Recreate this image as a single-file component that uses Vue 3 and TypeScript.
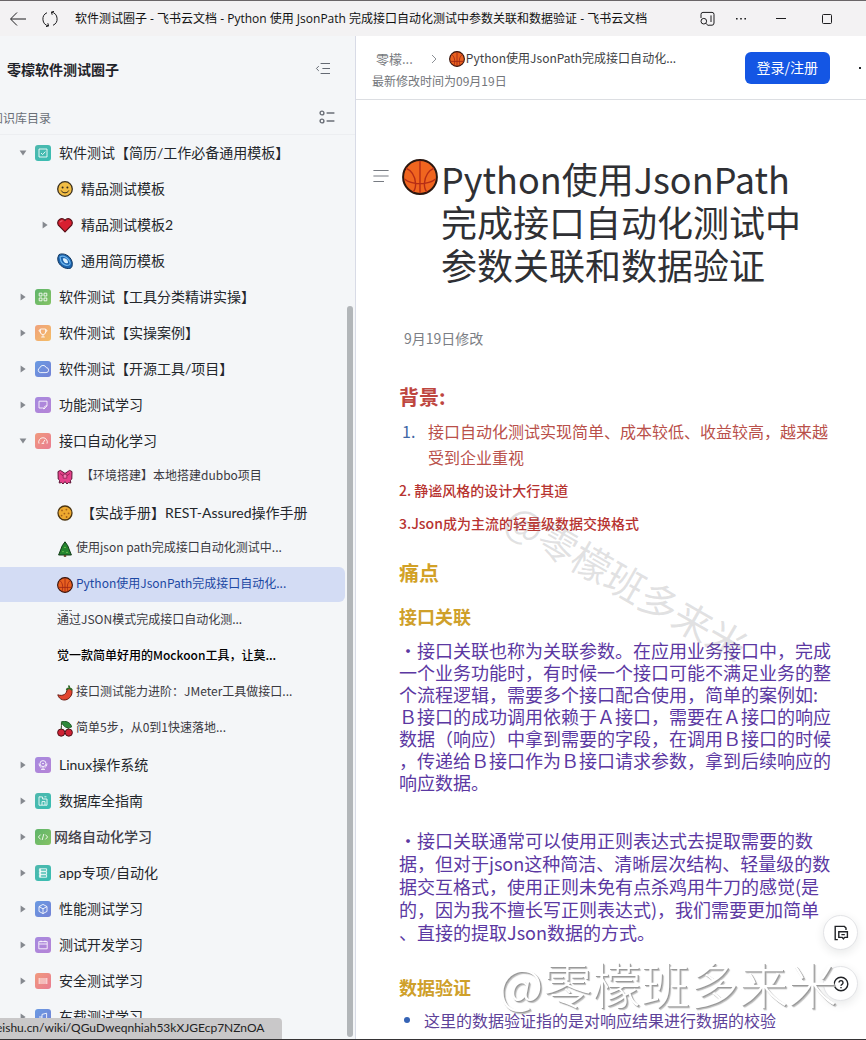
<script setup lang="ts">
interface Shape {
  d: string
  fill?: string
  stroke?: string
  w?: number
}

interface TreeNode {
  label: string
  icon?: string
  tile?: string
  open?: boolean
  arrow?: boolean
  variant?: string
  children?: TreeNode[]
}

const circle = (x: number, y: number, r: number): string =>
  `M${x - r} ${y}a${r} ${r} 0 1 0 ${2 * r} 0a${r} ${r} 0 1 0 ${-2 * r} 0z`

const emojis: Record<string, Shape[]> = {
  ball: [
    { d: circle(8, 8, 7.4), fill: '#e8601f', stroke: '#33130d', w: 1.1 },
    { d: 'M8 1v14M1.4 10.4H14.6M2.6 3.4C5.6 5.5 6.4 10 5 14.4M13.4 3.4C10.4 5.5 9.6 10 11 14.4', stroke: '#9c2414', w: 0.8 },
  ],
  smile: [
    { d: circle(8, 8, 7.3), fill: '#f2bd45', stroke: '#3b301e', w: 1.3 },
    { d: circle(5.6, 6.5, 1) + circle(10.4, 6.5, 1), fill: '#33291c' },
    { d: 'M4.2 9.5C5.6 12.6 10.4 12.6 11.8 9.5', stroke: '#33291c', w: 1 },
  ],
  heart: [
    { d: 'M8 14.8L1.4 8.2C-1 3.6 4.6-.6 8 3.4C11.4-.6 17 3.6 14.6 8.2z', fill: '#d81f30', stroke: '#571018', w: 1.2 },
    { d: 'M3.2 5.4Q3.8 3.4 5.6 3.8', stroke: '#ef7480', w: 1 },
  ],
  galaxy: [
    { d: 'M2 1.6C6-.4 13 2 15 8.5C16 13 14.6 15.6 11.8 15.6C6 15.6 0 11 .8 4.6z', fill: '#1b63ae', stroke: '#12385f', w: 1 },
    { d: 'M3 4C6 1.4 12.4 5 13.2 10C13 14 6 12.6 4 8.6z', stroke: '#6db5ec', w: 1.2 },
    { d: 'M5.8 5.6C8.4 4.4 11.2 7 11 9.8C9 11.4 6 9.4 5.8 5.6z', fill: '#d9f0ff' },
  ],
  bow: [
    { d: 'M8 4.4L3.4 1.4L1 2.6L1.2 10L2.6 11.4L2.2 14L4.6 13.6L6 15L8 12.6L10 15L11.4 13.6L13.8 14L13.4 11.4L14.8 10L15 2.6L12.6 1.4z', fill: '#e5408a', stroke: '#5e1537', w: 1 },
    { d: 'M6.2 5.2h3.6v4H6.2zM3 4.4l3 2.4M13 4.4l-3 2.4', fill: '#f27fb2', stroke: '#8b1e50', w: 0.8 },
  ],
  cookie: [
    { d: circle(8, 8, 7), fill: '#eda92f', stroke: '#4c3510', w: 1.3 },
    { d: circle(5, 5.4, 0.9) + circle(9.4, 4.6, 0.9) + circle(11.6, 8.4, 0.9) + circle(7.4, 8.6, 0.9) + circle(4.6, 10.6, 0.9) + circle(9.6, 12, 0.9), fill: '#a4611a' },
  ],
  tree: [
    { d: 'M8 .8L10.8 4.8L12.4 9L14.4 14H1.6L3.6 9L5.2 4.8z', fill: '#24852f', stroke: '#123b18', w: 1 },
    { d: 'M6.8 14.2h2.4v1.6H6.8z', fill: '#5c3516' },
    { d: circle(8, 6.4, 0.7) + circle(6, 10.6, 0.7) + circle(10, 11.4, 0.7), fill: '#8ad05c' },
  ],
  chili: [
    { d: 'M10 4.2C10 9 6 11.6 .8 9.8C2 14.8 7.8 16.6 11.8 13.4C15 10.8 15.6 7 14.6 4.6C13 3 11 3 10 4.2z', fill: '#e2452f', stroke: '#681a12', w: 1 },
    { d: 'M9.6 5C10 2.6 14.6 2.8 15 5.4M12.4 3.4Q12.6 1.4 11.4.6', stroke: '#2f6a25', w: 1.7 },
  ],
  cherry: [
    { d: circle(4.2, 11.6, 3.6), fill: '#cf2234', stroke: '#4e1118', w: 1 },
    { d: circle(11.8, 11.6, 3.6), fill: '#cf2234', stroke: '#4e1118', w: 1 },
    { d: 'M4.2 8.4Q4.6 4 4.4 1.6M11.8 8.4Q10.4 4.6 6 2', stroke: '#2c4a1d', w: 1 },
    { d: 'M4.4 .8C8-.6 14 1.2 14.6 6C10.6 8 6.4 6.4 4.4 .8z', fill: '#2d8a3a', stroke: '#164a1d', w: 0.8 },
  ],
}

const glyphs: Record<string, string> = {
  check: 'M4 4h8v8H4zM6 8l1.6 1.6L10.4 6.6',
  grid: 'M4.2 4.2h2.8v2.8H4.2zM9 4.2h2.8v2.8H9zM4.2 9h2.8v2.8H4.2zM9 9h2.8v2.8H9z',
  trophy: 'M5.4 4h5.2v3a2.6 2.6 0 0 1-5.2 0zM5.2 5H4q0 2 1.6 2.6M10.8 5H12q0 2-1.6 2.6M8 9.8V12M6.2 12h3.6',
  cloud: 'M5.2 11.6a2.5 2.5 0 0 1-.3-4.8a3.3 3.3 0 0 1 6.3-.2a2.5 2.5 0 0 1-.2 5z',
  note: 'M4 4.2h8v4.6L9 12L7.6 11H4zM9 12q-.6-3 3-3.2',
  gauge: 'M4 10.6a4.3 4.3 0 1 1 8 0M8 9.8l2-3M6.6 10.4h2.6',
  bulb: 'M8 3.6a3 3 0 1 1 0 6a3 3 0 1 1 0-6M8 9.6V12.6M6 12.4h4M4 6.6q0 3 2.4 4.2M12 6.6q0 3-2.4 4.2M7 6.6h2',
  db: 'M4 3.8v8.4h8V6H7.6V4zM7 12V8.6h3V12M9.4 3.8h2',
  code: 'M5.6 5.6L3.4 8l2.2 2.4M10.4 5.6L12.6 8l-2.2 2.4M8.8 5L7.2 11',
  server: 'M4.4 3.8h7.2v2.4H4.4zM4.4 6.8h7.2v2.4H4.4zM4.4 9.8h7.2v2.4H4.4zM5.6 3.8v8.4',
  cube: 'M8 3.4l4 2.2v4.8l-4 2.2l-4-2.2V5.6zM4 5.6l4 2.2l4-2.2M8 7.8v4.8',
  calendar: 'M3.8 4.6h8.4v7.2H3.8zM3.8 7h8.4M6 3.6v1.6M10 3.6v1.6',
  bars: 'M4.2 5v6M6 5v6M8 5v6M10 5v6M11.8 5v6',
  car: 'M4 11l3-1V5.4l4.6-1.2V9.6M4 8h3M9.6 9.6h2',
}

const tree: TreeNode[] = [
  {
    label: '软件测试【简历/工作必备通用模板】', icon: 'check', tile: 'teal', arrow: true, open: true,
    children: [
      { label: '精品测试模板', icon: 'smile' },
      { label: '精品测试模板2', icon: 'heart', arrow: true },
      { label: '通用简历模板', icon: 'galaxy' },
    ],
  },
  { label: '软件测试【工具分类精讲实操】', icon: 'grid', tile: 'green', arrow: true },
  { label: '软件测试【实操案例】', icon: 'trophy', tile: 'orange', arrow: true },
  { label: '软件测试【开源工具/项目】', icon: 'cloud', tile: 'blue', arrow: true },
  { label: '功能测试学习', icon: 'note', tile: 'purple', arrow: true },
  {
    label: '接口自动化学习', icon: 'gauge', tile: 'red', arrow: true, open: true,
    children: [
      { label: '【环境搭建】本地搭建dubbo项目', icon: 'bow', variant: 'small' },
      { label: '【实战手册】REST-Assured操作手册', icon: 'cookie' },
      { label: '使用json path完成接口自动化测试中...', icon: 'tree', variant: 'small near' },
      { label: 'Python使用JsonPath完成接口自动化...', icon: 'ball', variant: 'small near current' },
      { label: '通过JSON模式完成接口自动化测...', variant: 'small marked' },
      { label: '觉一款简单好用的Mockoon工具，让莫...', variant: 'small strong' },
      { label: '接口测试能力进阶：JMeter工具做接口...', icon: 'chili', variant: 'small near' },
      { label: '简单5步，从0到1快速落地...', icon: 'cherry', variant: 'small near' },
    ],
  },
  { label: 'Linux操作系统', icon: 'bulb', tile: 'purple', arrow: true },
  { label: '数据库全指南', icon: 'db', tile: 'teal', arrow: true },
  { label: '网络自动化学习', icon: 'code', tile: 'green', arrow: true, variant: 'near medium' },
  { label: 'app专项/自动化', icon: 'server', tile: 'teal', arrow: true },
  { label: '性能测试学习', icon: 'cube', tile: 'blue', arrow: true },
  { label: '测试开发学习', icon: 'calendar', tile: 'purple', arrow: true },
  { label: '安全测试学习', icon: 'bars', tile: 'red', arrow: true },
  { label: '车载测试学习', icon: 'car', tile: 'blue', arrow: true },
]

const rows = tree.flatMap((n) => [
  { ...n, child: false },
  ...(n.children ?? []).map((c) => ({ ...c, child: true })),
])

const titleLines = ['Python使用JsonPath', '完成接口自动化测试中', '参数关联和数据验证']

const painOne = [
  '・接口关联也称为关联参数。在应用业务接口中，完成',
  '一个业务功能时，有时候一个接口可能不满足业务的整',
  '个流程逻辑，需要多个接口配合使用，简单的案例如:',
  'Ｂ接口的成功调用依赖于Ａ接口，需要在Ａ接口的响应',
  '数据（响应）中拿到需要的字段，在调用Ｂ接口的时候',
  '，传递给Ｂ接口作为Ｂ接口请求参数，拿到后续响应的',
  '响应数据。',
]

const painTwo = [
  '・接口关联通常可以使用正则表达式去提取需要的数',
  '据，但对于json这种简洁、清晰层次结构、轻量级的数',
  '据交互格式，使用正则未免有点杀鸡用牛刀的感觉(是',
  '的，因为我不擅长写正则表达式)，我们需要更加简单',
  '、直接的提取Json数据的方式。',
]
</script>

<template>
  <div class="window">
    <header class="titlebar">
      <button class="plain" aria-label="返回">
        <svg width="18" height="18" viewBox="0 0 18 18"><path d="M17 9H2M8 2.5L1.5 9L8 15.5" /></svg>
      </button>
      <button class="plain reload" aria-label="刷新">
        <svg width="18" height="18" viewBox="0 0 18 18">
          <path d="M7.4 15.9A7 7 0 0 1 6 2.7M10.6 2.1A7 7 0 0 1 12 15.3M5 16.6L7.6 15.9L6.8 13.2M13 1.4L10.4 2.1L11.2 4.8" />
        </svg>
      </button>
      <span class="page-name">软件测试圈子 - 飞书云文档 - Python 使用 JsonPath 完成接口自动化测试中参数关联和数据验证 - 飞书云文档</span>
      <span class="window-tools">
        <button class="plain" aria-label="搜索标签页">
          <svg width="16" height="16" viewBox="0 0 16 16">
            <path d="M2 7V3.4Q2 1.4 4 1.4H13Q15 1.4 15 3.4V12Q15 14.2 13 14.2H9.4M12 4.4V11M4.8 7.4a2.8 2.8 0 1 1 0 5.6a2.8 2.8 0 1 1 0-5.6M6.8 12.2L9.6 15" />
          </svg>
        </button>
        <button class="plain" aria-label="更多">
          <svg width="12" height="16" viewBox="0 0 12 16"><path class="solid" d="M1 7h1.6v1.6H1zM5.2 7h1.6v1.6H5.2zM9.4 7h1.6v1.6H9.4z" /></svg>
        </button>
        <button class="plain minimize" aria-label="最小化">
          <svg width="10" height="16" viewBox="0 0 10 16"><path d="M0 7.5h10" /></svg>
        </button>
        <button class="plain maximize" aria-label="最大化">
          <svg width="12" height="16" viewBox="0 0 12 16"><rect x="1.5" y="3.5" width="9" height="9" rx="1" /></svg>
        </button>
      </span>
    </header>

    <div class="body">
      <aside class="sidebar">
        <div class="side-head">
          <h2>零檬软件测试圈子</h2>
          <button class="plain" aria-label="收起侧栏">
            <svg width="16" height="16" viewBox="0 0 16 16"><path d="M5.6 2.5H15M7.4 7.5H15M5.6 12.5H15M3.8 5.1L1.4 7.5l2.4 2.4" /></svg>
          </button>
        </div>
        <div class="side-sub">
          <span>知识库目录</span>
          <button class="plain" aria-label="目录选项">
            <svg width="16" height="16" viewBox="0 0 16 16">
              <path d="M7.6 4H15.4M7.6 12H15.4" /><circle cx="3" cy="4" r="1.9" /><circle cx="3" cy="12" r="1.9" />
            </svg>
          </button>
        </div>
        <ul class="tree">
          <li v-for="row in rows" :key="row.label" class="row" :class="[row.variant, { child: row.child }]">
            <span class="toggle-slot">
              <button v-if="row.arrow" class="plain toggle" :aria-label="(row.open ? '收起' : '展开') + row.label">
                <svg width="8" height="8" viewBox="0 0 8 8">
                  <path :d="row.open ? 'M.6 1.4h6.8L4 6.6z' : 'M1.6.4v7.2L6.6 4z'" />
                </svg>
              </button>
            </span>
            <a href="#">
              <svg v-if="row.tile && row.icon" class="tile" :class="row.tile" width="16" height="16" viewBox="0 0 16 16">
                <path :d="glyphs[row.icon]" />
              </svg>
              <svg v-else-if="row.icon" class="emoji" width="16" height="16" viewBox="0 0 16 16">
                <path
                  v-for="(s, i) in emojis[row.icon]" :key="i" :d="s.d" :fill="s.fill ?? 'none'"
                  :stroke="s.stroke ?? 'none'" :stroke-width="s.w ?? 0"
                />
              </svg>
              <span class="label">{{ row.label }}</span>
            </a>
          </li>
        </ul>
        <div class="thumb"></div>
        <div class="status">eishu.cn/wiki/QGuDweqnhiah53kXJGEcp7NZnOA</div>
      </aside>

      <main class="main">
        <header class="doc-head">
          <div class="crumb-block">
            <nav class="crumbs">
              <a href="#" class="root-crumb">零檬...</a>
              <svg class="chevron" width="8" height="12" viewBox="0 0 8 12"><path d="M2 2l4 4l-4 4" /></svg>
              <svg class="emoji" width="16" height="16" viewBox="0 0 16 16">
                <path
                  v-for="(s, i) in emojis.ball" :key="i" :d="s.d" :fill="s.fill ?? 'none'"
                  :stroke="s.stroke ?? 'none'" :stroke-width="s.w ?? 0"
                />
              </svg>
              <a href="#" class="here">Python使用JsonPath完成接口自动化...</a>
            </nav>
            <p class="modified">最新修改时间为09月19日</p>
          </div>
          <button class="login">登录/注册</button>
          <button class="plain more" aria-label="更多操作">
            <svg width="18" height="16" viewBox="0 0 18 16"><path class="solid" d="M1 7h2v2H1zM8 7h2v2H8zM15 7h2v2H15z" /></svg>
          </button>
        </header>

        <article class="doc">
          <div class="doc-title">
            <button class="plain outline" aria-label="文档大纲">
              <svg width="16" height="16" viewBox="0 0 16 16"><path d="M.4 2.5h15.2M.4 8h15.2M.4 13.5h10.6" /></svg>
            </button>
            <svg class="big-ball" width="36" height="36" viewBox="0 0 36 36">
              <circle cx="18" cy="18" r="16.9" />
              <path d="M18 1.8v32.4M4 9.2C9 11.4 13 17 13.6 24.4Q13.8 30 11 33M32 9.2C27 11.4 23 17 22.4 24.4Q22.2 30 25 33M2.4 20Q8 24.6 18 24.6T33.6 20" />
            </svg>
            <h1><span v-for="line in titleLines" :key="line">{{ line }}</span></h1>
          </div>
          <p class="date">9月19日修改</p>

          <h2 class="red-head">背景:</h2>
          <ol>
            <li><span class="num">1.</span><span>接口自动化测试实现简单、成本较低、收益较高，越来越受到企业重视</span></li>
          </ol>
          <p class="point">2. 静谧风格的设计大行其道</p>
          <p class="point">3.Json成为主流的轻量级数据交换格式</p>

          <h2 class="gold-head">痛点</h2>
          <h3>接口关联</h3>
          <p class="text first"><span v-for="line in painOne" :key="line">{{ line }}</span></p>
          <p class="text second"><span v-for="line in painTwo" :key="line">{{ line }}</span></p>

          <h3 class="verify">数据验证</h3>
          <ul class="bullets"><li>这里的数据验证指的是对响应结果进行数据的校验</li></ul>
        </article>

        <div class="mark diagonal" aria-hidden="true">@零檬班多来米</div>
        <div class="floaters">
          <button aria-label="评论">
            <svg width="16" height="16" viewBox="0 0 16 16">
              <path d="M4.8 14.6H2.2V1.4H11.4L13 3V5M5.8 6.8H14.4V12.4H11.6L10.4 13.8L9.2 12.4H5.8zM8.4 9.6h3.4" />
            </svg>
          </button>
          <button aria-label="帮助">
            <svg width="16" height="16" viewBox="0 0 16 16">
              <circle cx="8" cy="8" r="6.8" /><path d="M6 6.6a2 2 0 1 1 3 1.8Q8 9 8 9.8M8 11v1.2" />
            </svg>
          </button>
        </div>
        <div class="mark flat" aria-hidden="true">@零檬班多来米</div>
      </main>
    </div>
  </div>
</template>

<style>
body {
  margin: 0;
}
</style>

<style scoped>
* {
  box-sizing: border-box;
}

.window {
  display: flex;
  flex-direction: column;
  height: 100vh;
  overflow: hidden;
  border-top: 1px solid #6a6668;
  border-bottom: 1px solid #353335;
  background: #fff;
  color: #23262b;
  font-family: "Noto Sans CJK SC", sans-serif;
  font-size: 14px;
}

h1, h2, h3, p, ul, ol {
  margin: 0;
  padding: 0;
}

ul, ol {
  list-style: none;
}

a {
  color: inherit;
  text-decoration: none;
}

button {
  font-family: inherit;
  cursor: pointer;
}

svg {
  display: block;
  flex: none;
}

.plain {
  display: flex;
  flex: none;
  padding: 0;
  border: 0;
  background: none;
  color: inherit;
}

.plain svg,
.floaters svg,
.chevron {
  fill: none;
  stroke: currentColor;
}

.plain .solid {
  fill: currentColor;
  stroke: none;
}

.titlebar {
  display: flex;
  align-items: center;
  flex: none;
  height: 35px;
  padding: 0 33px 0 9px;
  background: #f3f2f3;
  color: #1d1d1f;
}

.reload {
  margin-left: 14px;
}

.page-name {
  flex: 1;
  min-width: 0;
  margin-left: 16px;
  overflow: hidden;
  white-space: nowrap;
  color: #111;
  font: 12px/20px "Open Sans", "Noto Sans CJK SC", sans-serif;
}

.window-tools {
  display: flex;
  align-items: center;
}

.window-tools .plain {
  margin-left: 20px;
}

.window-tools .minimize {
  margin-left: 29px;
}

.window-tools .maximize {
  margin-left: 35px;
}

.window-tools .plain:first-child {
  margin-left: 0;
}

.body {
  display: grid;
  grid-template-columns: 356px minmax(0, 1fr);
  flex: 1;
  min-height: 0;
}

.sidebar {
  position: relative;
  overflow: hidden;
  border-right: 1px solid #d8dbe6;
  background: #f4f6f8;
}

.side-head,
.side-sub {
  display: flex;
  align-items: center;
  justify-content: space-between;
}

.side-head {
  height: 64px;
  padding: 2px 24px 0 7px;
  color: #646a73;
}

.side-head h2 {
  color: #1f2329;
  font-size: 14px;
  font-weight: 700;
}

.side-sub {
  height: 35px;
  margin-left: -9px;
  padding-right: 20px;
  border-bottom: 1px solid #eceef1;
  color: #6a6f77;
  font-size: 12px;
}

.side-sub svg {
  stroke-width: 1.4;
}

.row {
  display: flex;
  align-items: center;
  height: 36px;
  white-space: nowrap;
}

.row a {
  display: flex;
  align-items: center;
  gap: 8px;
  font-family: Lato, "Noto Sans CJK SC", sans-serif;
}

.label {
  padding-bottom: 2px;
}

.small .label {
  padding-bottom: 5px;
}

.toggle-slot {
  display: flex;
  justify-content: flex-end;
  width: 27px;
  margin-right: 8px;
}

.child .toggle-slot {
  width: 49px;
}

.toggle svg {
  fill: #85898f;
  stroke: none;
}

.small a {
  color: #3a393f;
  font-family: "Noto Sans CJK SC", sans-serif;
  font-size: 12px;
}

.near a {
  gap: 3px;
}

.medium a {
  color: #414047;
  font-weight: 500;
}

.row.strong a {
  color: #000;
  font-weight: 500;
}

.row.current {
  height: 35px;
  margin: 0 10px 1px 0;
  border-radius: 0 6px 6px 0;
  background: #d3dcf4;
}

.row.current a {
  color: #1c48a3;
}

.marked a {
  position: relative;
}

.marked a::before {
  content: "";
  position: absolute;
  top: 0;
  left: 4px;
  width: 11px;
  border-top: 1px dashed #77777b;
}

.tile {
  border-radius: 3px;
  fill: none;
  stroke: rgba(255, 255, 255, 0.85);
}

.teal {
  background: linear-gradient(135deg, #4fb8ae, #38bdb2);
}

.green {
  background: linear-gradient(135deg, #5fb56b, #84c264);
}

.orange {
  background: linear-gradient(135deg, #f0a27c, #f4bd66);
}

.blue {
  background: linear-gradient(135deg, #6a9ae2, #7382d6);
}

.purple {
  background: linear-gradient(135deg, #a68adf, #b583d6);
}

.red {
  background: linear-gradient(135deg, #f09a7e, #e97c92);
}

.thumb {
  position: absolute;
  top: 270px;
  right: 2px;
  bottom: 2px;
  width: 6px;
  border-radius: 3px;
  background: #b2b6b9;
}

.status {
  position: absolute;
  bottom: 0;
  left: 0;
  width: 282px;
  height: 21px;
  border-radius: 0 4px 0 0;
  background: #c9c8c9;
  color: #222;
  font: 12px/20px Lato, "Noto Sans CJK SC", sans-serif;
  text-indent: -4px;
}

.main {
  position: relative;
  overflow: hidden;
}

.doc-head {
  display: flex;
  align-items: center;
  height: 64px;
  padding-left: 16px;
  overflow: hidden;
  border-bottom: 1px solid #dcdee2;
}

.crumb-block {
  flex: 1;
  min-width: 0;
  padding-top: 2px;
}

.crumbs {
  display: flex;
  align-items: center;
  height: 24px;
  padding-left: 4px;
  white-space: nowrap;
}

.root-crumb {
  color: #777a80;
  font-size: 13px;
}

.chevron {
  margin: 0 11px 0 17px;
  color: #8c9096;
}

.here {
  margin-left: 1px;
  padding-bottom: 3px;
  color: #3e3f44;
  font-size: 12px;
}

.modified {
  color: #73767b;
  font-size: 12px;
  line-height: 20px;
}

.login {
  height: 32px;
  padding: 0 12px 2px;
  border: 0;
  border-radius: 6px;
  background: #1456e4;
  color: #fff;
  font-size: 14px;
}

.more {
  margin: 0 -10px 0 28px;
}

.doc {
  padding: 57px 30px 0 43px;
}

.doc-title {
  display: flex;
  align-items: flex-start;
  margin-left: -26px;
}

.outline {
  margin: 11px 13px 0 0;
  color: #777b82;
}

.big-ball {
  margin: 2px 3px 0 0;
  fill: #f0651f;
  stroke: #2a1710;
  stroke-width: 2;
}

.big-ball path {
  fill: none;
  stroke: #b52d16;
  stroke-width: 1.4;
}

h1 {
  color: #2f3034;
  font-size: 36px;
  font-weight: 400;
  line-height: 43px;
}

h1 span,
.text span {
  display: block;
  white-space: nowrap;
}

.date {
  margin: 42px 0 34px 5px;
  color: #7b7e84;
  line-height: 20px;
}

.red-head,
.gold-head {
  color: #be463f;
  font-size: 20px;
  line-height: 30px;
}

ol {
  margin: 6px 0 8px;
}

ol li {
  display: flex;
  color: #b9504a;
  font-size: 16px;
  line-height: 26px;
}

.num {
  flex: none;
  width: 29px;
  padding-left: 3px;
  color: #3f67a5;
}

.point {
  margin-bottom: 9px;
  color: #b73330;
  font-weight: 500;
  line-height: 24px;
}

.gold-head {
  margin-top: 23px;
  color: #d2a126;
}

h3 {
  margin-top: 14px;
  color: #cfa02a;
  font-size: 18px;
  line-height: 28px;
}

.text {
  color: #5b38a2;
  font-size: 18px;
}

.first {
  margin-top: 9px;
  line-height: 22px;
}

.second {
  margin-top: 36px;
  line-height: 23px;
}

.verify {
  margin-top: 29px;
}

.bullets {
  margin-top: 6px;
  color: #5e4299;
  font-size: 16px;
  line-height: 26px;
}

.bullets li {
  display: flex;
  align-items: center;
  gap: 14px;
  padding-left: 5px;
}

.bullets li::before {
  content: "";
  width: 6px;
  height: 6px;
  border-radius: 50%;
  background: #3563b5;
}

.mark {
  position: absolute;
  pointer-events: none;
  white-space: nowrap;
}

.diagonal {
  top: 515px;
  left: 136px;
  color: rgba(120, 120, 125, 0.22);
  font-size: 39px;
  line-height: 60px;
  transform: rotate(30deg);
}

.flat {
  right: 29px;
  bottom: 20px;
  color: #fff;
  font-size: 49px;
  font-weight: 300;
  line-height: 72px;
  text-shadow: 1px 1px 0 #999, 2px 2px 1px #bbb;
}

.floaters {
  position: absolute;
  right: 8px;
  bottom: 38px;
  display: flex;
  flex-direction: column;
  gap: 16px;
}

.floaters button {
  display: flex;
  align-items: center;
  justify-content: center;
  width: 35px;
  height: 35px;
  padding: 0;
  border: 1px solid #e3e4e7;
  border-radius: 50%;
  background: #fff;
  box-shadow: 0 3px 10px rgba(30, 35, 40, 0.1);
  color: #202226;
}

.floaters svg {
  stroke-width: 1.4;
}
</style>
